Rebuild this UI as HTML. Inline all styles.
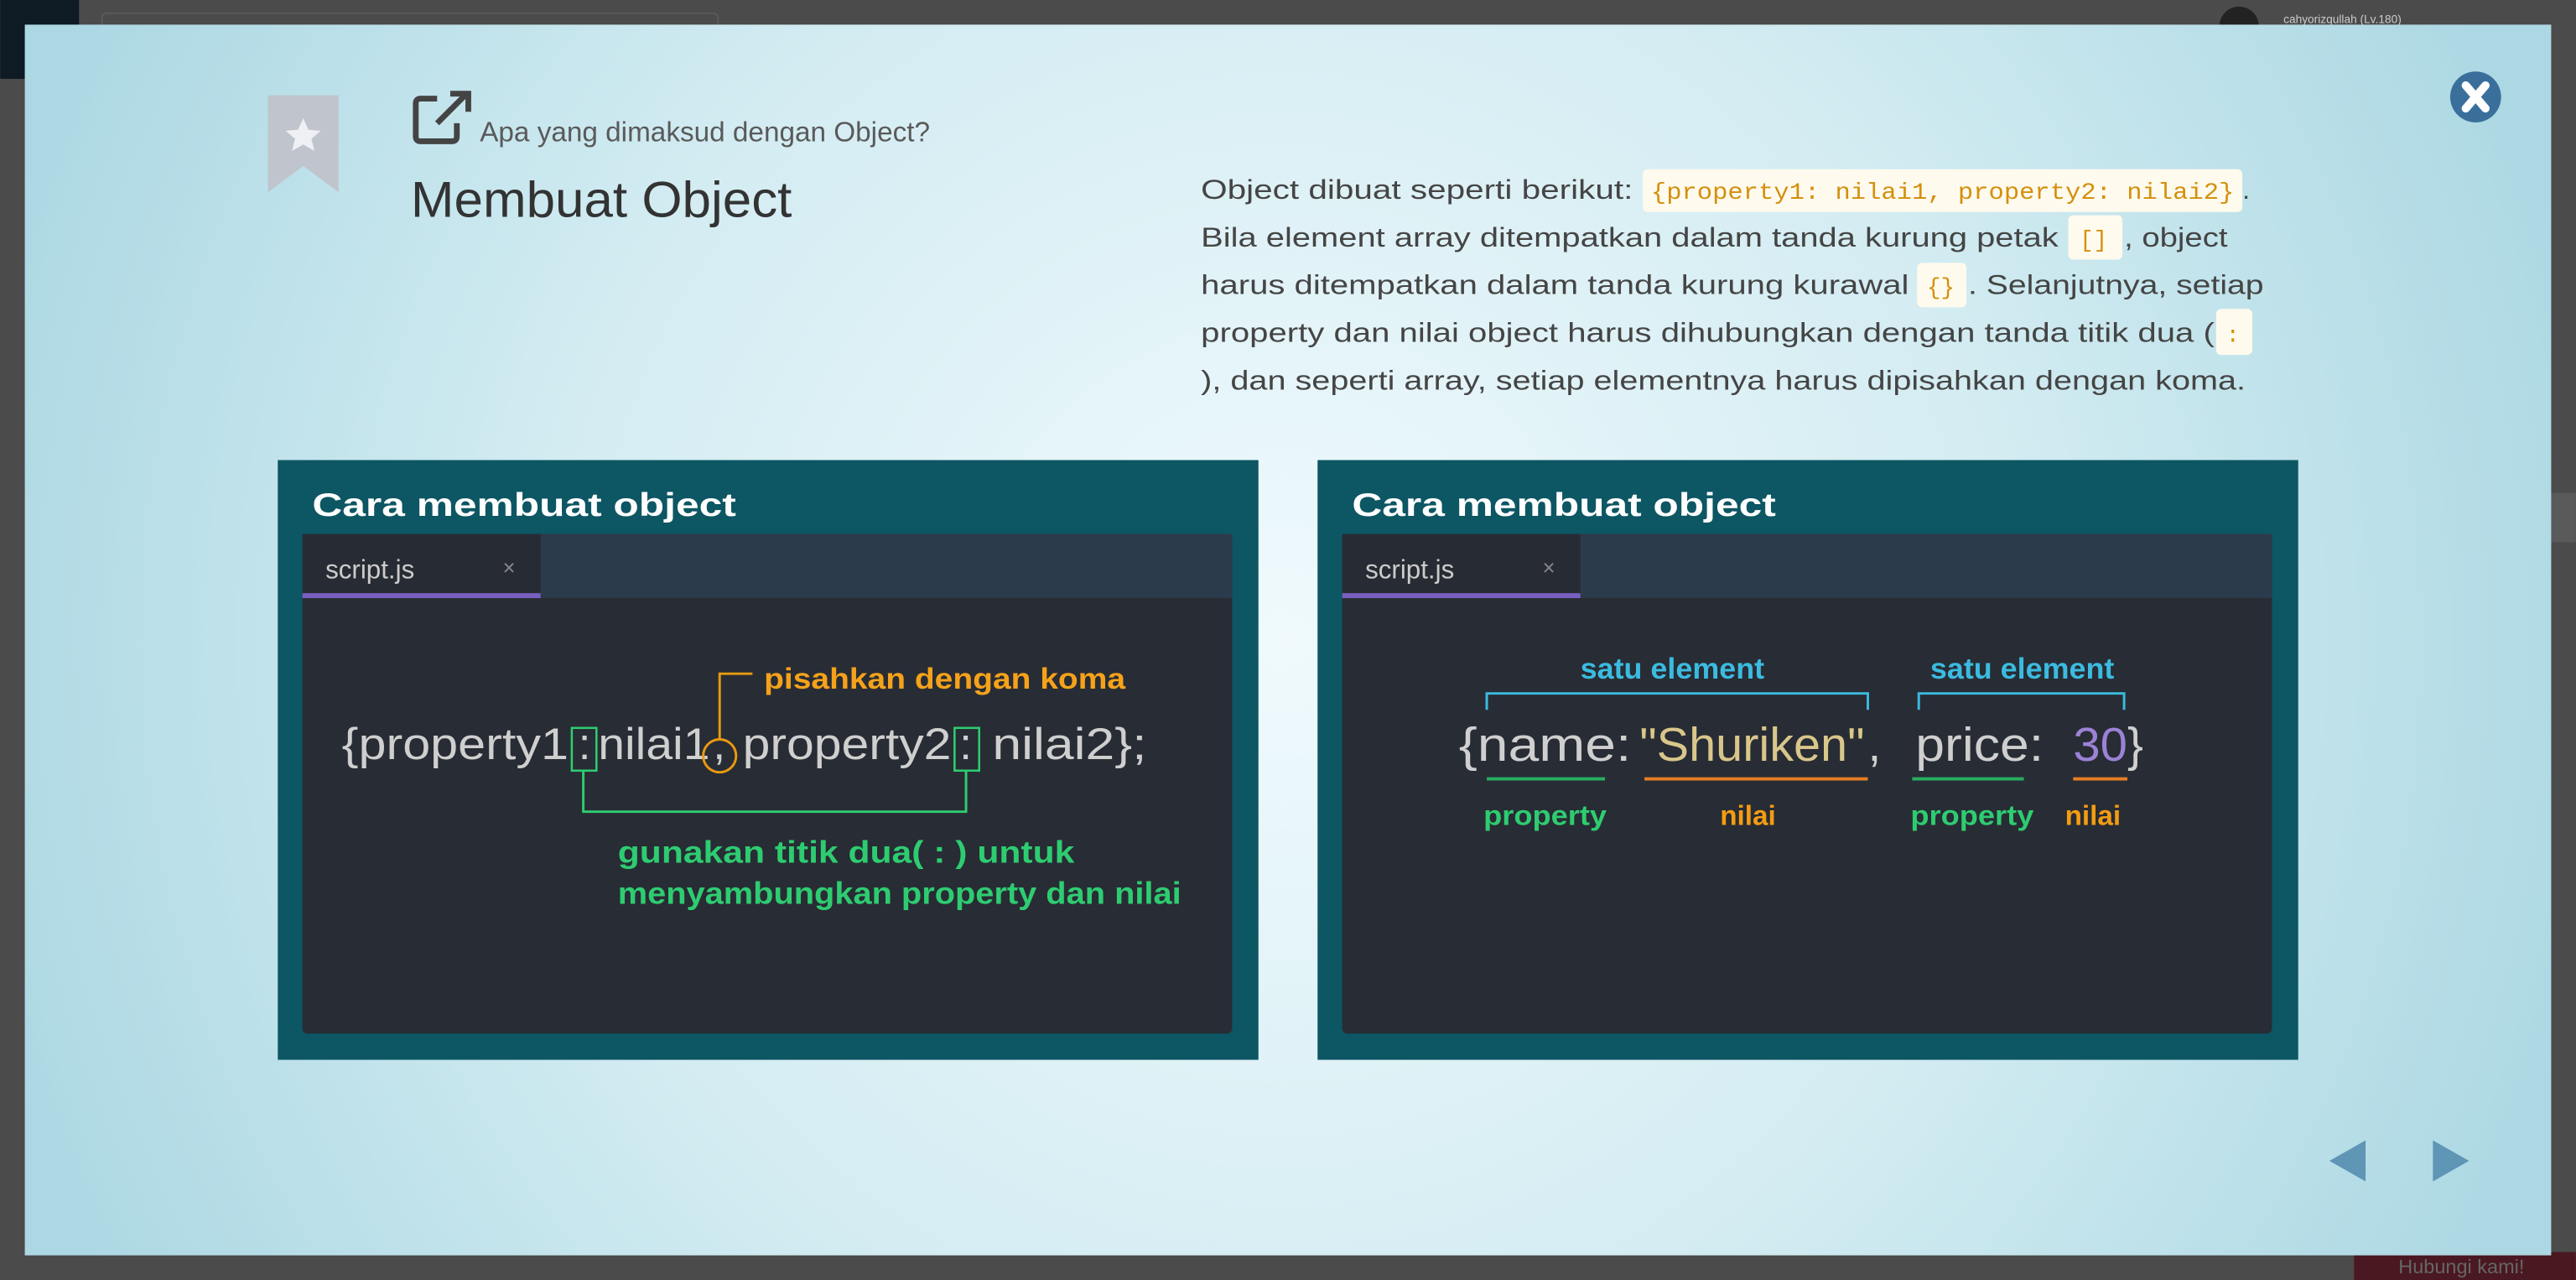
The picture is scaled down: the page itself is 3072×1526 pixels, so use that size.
<!DOCTYPE html>
<html><head><meta charset="utf-8"><style>
html,body{margin:0;padding:0;background:#4b4b4b;width:3072px;height:1526px;overflow:hidden}
svg{display:block}
</style></head><body>
<svg width="3072" height="1526" viewBox="0 0 1568 779" xmlns="http://www.w3.org/2000/svg" font-family="Liberation Sans, DejaVu Sans, sans-serif">
<defs>
<radialGradient id="bg" cx="780" cy="390" r="820" gradientUnits="userSpaceOnUse">
<stop offset="0" stop-color="#f0fafd"/><stop offset="0.55" stop-color="#d3ecf2"/><stop offset="1" stop-color="#acd8e3"/>
</radialGradient>
</defs>
<rect width="1568" height="779" fill="#4b4b4b"/>
<rect x="0" y="0" width="48" height="48" fill="#0e1b24"/>
<rect x="62" y="8" width="375" height="12" rx="3" fill="none" stroke="#5a5a5a"/>
<circle cx="1363" cy="16" r="12" fill="#222"/>
<text x="1390" y="14" font-size="7" fill="#ccc">cahyorizqullah (Lv.180)</text>
<rect x="1553" y="300" width="15" height="30" fill="#5a5a5a"/>
<rect x="1433" y="762" width="135" height="17" fill="#4a1820"/>
<text x="1460" y="775" font-size="12" fill="#666">Hubungi kami!</text>
<!-- modal -->
<rect x="15" y="15" width="1538" height="749" fill="url(#bg)"/>
<!-- bookmark -->
<path d="M163 58 H206 V117 L184.5 101 L163 117 Z" fill="#c0c4cd"/>
<path d="M184.5 72 l3.2 7 7.5 .6 -5.7 4.9 1.8 7.4 -6.8 -4 -6.8 4 1.8 -7.4 -5.7 -4.9 7.5 -.6z" fill="#eef0f3"/>
<!-- external link icon -->
<path d="M266 60 H256 Q253 60 253 63 V83 Q253 86 256 86 H275 Q278 86 278 83 V75" fill="none" stroke="#444" stroke-width="3.5"/>
<path d="M266 75 L283 58 M274 57 H285 V68" fill="none" stroke="#444" stroke-width="3.5"/>
<text x="292" y="86" font-size="17" fill="#5a5a5a">Apa yang dimaksud dengan Object?</text>
<text x="250" y="132" font-size="31" fill="#333" textLength="232" lengthAdjust="spacingAndGlyphs">Membuat Object</text>
<!-- close -->
<circle cx="1507" cy="59" r="15.5" fill="#3a6f9c"/>
<path d="M1501 52 L1513 66 M1513 52 L1501 66" stroke="#fff" stroke-width="5" stroke-linecap="round"/>
<!-- paragraph -->
<g font-size="16.5" fill="#454545">
<rect x="1000" y="103" width="365" height="26" rx="3" fill="#fffaee"/>
<text x="731" y="121" textLength="263" lengthAdjust="spacingAndGlyphs">Object dibuat seperti berikut:</text>
<text x="1005" y="121" font-family="Liberation Mono, monospace" font-size="14" fill="#d4900c" textLength="355" lengthAdjust="spacingAndGlyphs">{property1: nilai1, property2: nilai2}</text>
<text x="1365" y="121">.</text>
<rect x="1259" y="131" width="33" height="27" rx="3" fill="#fffaee"/>
<text x="731" y="150" textLength="522" lengthAdjust="spacingAndGlyphs">Bila element array ditempatkan dalam tanda kurung petak</text>
<text x="1266" y="150" font-family="Liberation Mono, monospace" font-size="14" fill="#d4900c">[]</text>
<text x="1293" y="150" textLength="63" lengthAdjust="spacingAndGlyphs">, object</text>
<rect x="1167" y="160" width="30" height="27" rx="3" fill="#fffaee"/>
<text x="731" y="179" textLength="431" lengthAdjust="spacingAndGlyphs">harus ditempatkan dalam tanda kurung kurawal</text>
<text x="1173" y="179" font-family="Liberation Mono, monospace" font-size="14" fill="#d4900c">{}</text>
<text x="1198" y="179" textLength="180" lengthAdjust="spacingAndGlyphs">. Selanjutnya, setiap</text>
<rect x="1349" y="188" width="22" height="28" rx="3" fill="#fffaee"/>
<text x="731" y="208" textLength="617" lengthAdjust="spacingAndGlyphs">property dan nilai object harus dihubungkan dengan tanda titik dua (</text>
<text x="1355" y="208" font-family="Liberation Mono, monospace" font-size="14" fill="#d4900c">:</text>
<text x="731" y="237" textLength="636" lengthAdjust="spacingAndGlyphs">), dan seperti array, setiap elementnya harus dipisahkan dengan koma.</text>
</g>
<!-- image 1 -->
<g>
<rect x="169" y="280" width="597" height="365" fill="#0d5663"/>
<text x="190" y="314" font-size="20" font-weight="bold" fill="#fff" textLength="258" lengthAdjust="spacingAndGlyphs">Cara membuat object</text>
<rect x="184" y="325" width="566" height="304" rx="3" fill="#282c34"/>
<rect x="184" y="325" width="566" height="39" fill="#2c3b4c"/>
<rect x="184" y="325" width="145" height="39" fill="#272c34"/>
<rect x="184" y="361" width="145" height="3" fill="#7a5fc2"/>
<text x="198" y="352" font-size="16" fill="#ccc">script.js</text>
<text x="306" y="350" font-size="13" fill="#888">×</text>
<g font-size="27" fill="#cfcfcf">
<text x="208" y="462" textLength="138" lengthAdjust="spacingAndGlyphs">{property1</text>
<text x="352" y="462">:</text>
<text x="364" y="462" textLength="68" lengthAdjust="spacingAndGlyphs">nilai1</text>
<text x="434" y="462">,</text>
<text x="452" y="462" textLength="127" lengthAdjust="spacingAndGlyphs">property2</text>
<text x="584" y="462">:</text>
<text x="604" y="462" textLength="94" lengthAdjust="spacingAndGlyphs">nilai2};</text>
</g>
<rect x="348" y="443" width="15" height="26" fill="none" stroke="#2ecc71" stroke-width="1.3"/>
<rect x="581" y="443" width="15" height="26" fill="none" stroke="#2ecc71" stroke-width="1.3"/>
<path d="M355 469 V494 H588 V469" fill="none" stroke="#2ecc71" stroke-width="1.5"/>
<circle cx="438" cy="460" r="10" fill="none" stroke="#e89a10" stroke-width="1.5"/>
<path d="M438 450 V410 H458" fill="none" stroke="#e89a10" stroke-width="1.5"/>
<text x="465" y="419" font-size="18" font-weight="bold" fill="#f5a21a" textLength="220" lengthAdjust="spacingAndGlyphs">pisahkan dengan koma</text>
<g font-size="19" font-weight="bold" fill="#2ecc71">
<text x="376" y="525" textLength="278" lengthAdjust="spacingAndGlyphs">gunakan titik dua( : ) untuk</text>
<text x="376" y="550" textLength="343" lengthAdjust="spacingAndGlyphs">menyambungkan property dan nilai</text>
</g>
</g>
<!-- image 2 -->
<g>
<rect x="802" y="280" width="597" height="365" fill="#0d5663"/>
<text x="823" y="314" font-size="20" font-weight="bold" fill="#fff" textLength="258" lengthAdjust="spacingAndGlyphs">Cara membuat object</text>
<rect x="817" y="325" width="566" height="304" rx="3" fill="#282c34"/>
<rect x="817" y="325" width="566" height="39" fill="#2c3b4c"/>
<rect x="817" y="325" width="145" height="39" fill="#272c34"/>
<rect x="817" y="361" width="145" height="3" fill="#7a5fc2"/>
<text x="831" y="352" font-size="16" fill="#ccc">script.js</text>
<text x="939" y="350" font-size="13" fill="#888">×</text>
<g font-size="18" font-weight="bold" fill="#3bbbe0">
<text x="962" y="413" textLength="112" lengthAdjust="spacingAndGlyphs">satu element</text>
<text x="1175" y="413" textLength="112" lengthAdjust="spacingAndGlyphs">satu element</text>
</g>
<path d="M905 432 V422 H1137 V432 M1168 432 V422 H1293 V432" fill="none" stroke="#3bbbe0" stroke-width="1.5"/>
<g font-size="29" fill="#cfcfcf">
<text x="888" y="463" textLength="105" lengthAdjust="spacingAndGlyphs">{name:</text>
<text x="998" y="463" fill="#d9c68b" textLength="137" lengthAdjust="spacingAndGlyphs">"Shuriken"</text>
<text x="1137" y="463">,</text>
<text x="1166" y="463" textLength="78" lengthAdjust="spacingAndGlyphs">price:</text>
<text x="1262" y="463" fill="#9b82d6" textLength="33" lengthAdjust="spacingAndGlyphs">30</text>
<text x="1295" y="463">}</text>
</g>
<g stroke-width="2">
<path d="M905 474 H977" stroke="#27ae60"/><path d="M1001 474 H1137" stroke="#e67e22"/>
<path d="M1164 474 H1232" stroke="#27ae60"/><path d="M1262 474 H1295" stroke="#e67e22"/>
</g>
<g font-size="17" font-weight="bold">
<text x="903" y="502" fill="#2ecc71" textLength="75" lengthAdjust="spacingAndGlyphs">property</text>
<text x="1047" y="502" fill="#f39c12" textLength="34" lengthAdjust="spacingAndGlyphs">nilai</text>
<text x="1163" y="502" fill="#2ecc71" textLength="75" lengthAdjust="spacingAndGlyphs">property</text>
<text x="1257" y="502" fill="#f39c12" textLength="34" lengthAdjust="spacingAndGlyphs">nilai</text>
</g>
</g>
<!-- arrows -->
<path d="M1418 706.5 L1440 694 V719 Z" fill="#5f95b5"/>
<path d="M1481 694 L1503 706.5 L1481 719 Z" fill="#5f95b5"/>
</svg>
</body></html>
